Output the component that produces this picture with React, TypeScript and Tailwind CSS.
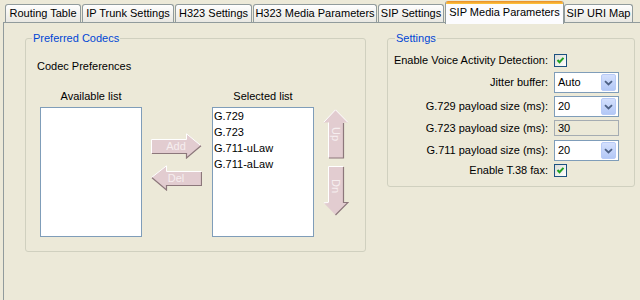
import React from 'react'

const tabs = [
  { label: 'Routing Table', cls: 'w-[76px]' },
  { label: 'IP Trunk Settings', cls: 'ml-[1px] w-[92px]' },
  { label: 'H323 Settings', cls: 'ml-[1px] w-[77px]' },
  { label: 'H323 Media Parameters', cls: 'ml-[1px] w-[124px]' },
  { label: 'SIP Settings', cls: 'ml-[1px] w-[66px]' },
  { label: 'SIP Media Parameters', cls: 'ml-[1px] w-[119px]', active: true },
  { label: 'SIP URI Map', cls: 'w-[69px]' },
]

const selected = ['G.729', 'G.723', 'G.711-uLaw', 'G.711-aLaw']

const arrowFill = '#E2CCD0'
const arrowShade = '#8C777B'
const arrowText = '#F6EEEF'

function Tab({ label, cls, active }: { label: string; cls: string; active?: boolean }) {
  if (active) {
    return (
      <div className={`relative z-10 -mb-[2px] flex h-[23px] flex-col overflow-hidden rounded-t-[3px] border-x border-[#919B9C] bg-[#FCFCFE] ${cls}`}>
        <div className="h-[3px] bg-linear-to-b from-[#E68B2C] to-[#FFC73C]" />
        <div className="flex flex-1 items-center justify-center pb-[3px]">{label}</div>
      </div>
    )
  }
  return (
    <div className={`flex h-[18px] items-center justify-center rounded-t-[3px] border-x border-t border-[#919B9C] bg-linear-to-b from-[#FEFEFE] to-[#E9E8E2] ${cls}`}>
      {label}
    </div>
  )
}

function ListBox({ items }: { items: string[] }) {
  return (
    <div className="mt-[4px] h-[130px] w-[102px] border border-[#7F9DB9] bg-white pl-px">
      {items.map((it) => (
        <div key={it} className="leading-[16px]">{it}</div>
      ))}
    </div>
  )
}

function AddArrow() {
  return (
    <svg width="51" height="26" viewBox="0 0 51 26">
      <polygon points="0.5,6.5 35.5,6.5 35.5,0.5 50,12.5 35.5,25 35.5,20.5 0.5,20.5" fill={arrowFill} />
      <polyline points="0.5,20 0.5,6.5 35.5,6.5 35.5,0.8 49.5,12.3" stroke="#fff" fill="none" />
      <polyline points="1,20.5 35.5,20.5 35.5,25 50,12.8" stroke={arrowShade} strokeWidth="1.2" fill="none" />
      <text x="25" y="17" textAnchor="middle" fontSize="11" fill={arrowText} fontFamily="Liberation Sans, sans-serif">Add</text>
    </svg>
  )
}

function DelArrow() {
  return (
    <svg width="51" height="26" viewBox="0 0 51 26">
      <polygon points="0.5,12.5 15.5,0.5 15.5,6.5 50.5,6.5 50.5,20.5 15.5,20.5 15.5,25" fill={arrowFill} />
      <polyline points="0.8,12.3 15.5,0.8 15.5,6.5 50.5,6.5" stroke="#fff" fill="none" />
      <polyline points="1,12.8 15.5,25 15.5,20.5 50.5,20.5 50.5,7" stroke={arrowShade} strokeWidth="1.2" fill="none" />
      <text x="25" y="17" textAnchor="middle" fontSize="11" fill={arrowText} fontFamily="Liberation Sans, sans-serif">Del</text>
    </svg>
  )
}

function UpArrow() {
  return (
    <svg width="26" height="50" viewBox="0 0 26 50">
      <polygon points="12.5,0.5 25,13.5 20.5,13.5 20.5,49 5.5,49 5.5,13.5 0.5,13.5" fill={arrowFill} />
      <polyline points="0.8,13.2 12.5,0.8 24.7,13.2" stroke="#fff" fill="none" />
      <polyline points="5.5,13.5 5.5,48.5" stroke="#fff" fill="none" />
      <polyline points="20.5,14 20.5,49 6,49" stroke={arrowShade} strokeWidth="1.2" fill="none" />
      <text x="0" y="0" textAnchor="middle" fontSize="11" fill={arrowText} fontFamily="Liberation Sans, sans-serif" transform="translate(9 25) rotate(90)">Up</text>
    </svg>
  )
}

function DnArrow() {
  return (
    <svg width="26" height="50" viewBox="0 0 26 50">
      <polygon points="5.5,0.5 20.5,0.5 20.5,36.5 25,36.5 12.5,49 0.5,36.5 5.5,36.5" fill={arrowFill} />
      <polyline points="5.5,36 5.5,0.5 20,0.5" stroke="#fff" fill="none" />
      <polyline points="0.8,36.8 5.5,36.5" stroke="#fff" fill="none" />
      <polyline points="20.5,1 20.5,36.5 25,36.5 12.5,49" stroke={arrowShade} strokeWidth="1.2" fill="none" />
      <text x="0" y="0" textAnchor="middle" fontSize="11" fill={arrowText} fontFamily="Liberation Sans, sans-serif" transform="translate(9 20) rotate(90)">Dn</text>
    </svg>
  )
}

function Check() {
  return (
    <span className="flex h-[13px] w-[13px] items-center justify-center border border-[#1C5180] bg-linear-to-br from-[#DCDCD7] to-white">
      <svg width="9" height="9" viewBox="0 0 9 9">
        <path d="M1.5 4l2 2.2L7.5 1.8" stroke="#21A121" strokeWidth="2" fill="none" />
      </svg>
    </span>
  )
}

function Combo({ value }: { value: string }) {
  return (
    <div className="flex h-[21px] w-[65px] items-center border border-[#7F9DB9] bg-white pl-[3px] pr-[2px]">
      <span className="flex-1">{value}</span>
      <span className="flex h-[17px] w-[15px] items-center justify-center rounded-[2px] border border-[#B8CBF7] bg-linear-to-b from-[#D4E0FD] to-[#B3C8F6]">
        <svg width="9" height="6" viewBox="0 0 9 6">
          <path d="M1 1.2l3.5 3.3L8 1.2" stroke="#4D6185" strokeWidth="1.8" fill="none" />
        </svg>
      </span>
    </div>
  )
}

function Row({ label, cls, children }: { label: string; cls: string; children: React.ReactNode }) {
  return (
    <div className={`flex items-center ${cls}`}>
      <span className="w-[160px] text-right">{label}</span>
      <div className="ml-[6px]">{children}</div>
    </div>
  )
}

export default function App() {
  return (
    <div className="flex h-[300px] w-[640px] flex-col overflow-hidden bg-[#ECE9D8] font-['Liberation_Sans',Arial,sans-serif] text-[11px] leading-[13px] text-black">
      {/* Tab strip */}
      <div className="flex h-[22px] items-end pl-[5px]">
        {tabs.map((t) => (
          <Tab key={t.label} {...t} />
        ))}
      </div>

      {/* Tab content */}
      <div className="ml-[3px] flex flex-1 items-start border-l border-t border-[#919B9C] pl-[21px] pt-[9px]">
        <fieldset className="w-[341px] rounded-[3px] border border-[#D0D0BF] pb-[14px]">
          <legend className="ml-[6px] px-px text-[#0046D5]">Preferred Codecs</legend>
          <div className="pl-[11px] pt-[15px]">
            <div>Codec Preferences</div>
            <div className="ml-[3px] mt-[17px] flex items-start">
              <div className="flex flex-col items-center">
                <span>Available list</span>
                <ListBox items={[]} />
              </div>
              <div className="ml-[9px] mt-[43px] flex flex-col gap-[6px]">
                <AddArrow />
                <DelArrow />
              </div>
              <div className="ml-[10px] flex flex-col items-center">
                <span>Selected list</span>
                <ListBox items={selected} />
              </div>
              <div className="ml-[9px] mt-[19px] flex flex-col gap-[7px]">
                <UpArrow />
                <DnArrow />
              </div>
            </div>
          </div>
        </fieldset>

        <fieldset className="ml-[21px] w-[248px] rounded-[3px] border border-[#D0D0BF] pb-[9px]">
          <legend className="ml-[7px] px-px text-[#0046D5]">Settings</legend>
          <div className="flex flex-col pt-[9px]">
            <Row label="Enable Voice Activity Detection:" cls="h-[13px]"><Check /></Row>
            <Row label="Jitter buffer:" cls="mt-[5px] h-[21px]"><Combo value="Auto" /></Row>
            <Row label="G.729 payload size (ms):" cls="mt-[3px] h-[21px]"><Combo value="20" /></Row>
            <Row label="G.723 payload size (ms):" cls="mt-[3px] h-[16px]">
              <div className="flex h-[16px] w-[65px] items-center border border-[#A5ACB2] pl-[3px]">30</div>
            </Row>
            <Row label="G.711 payload size (ms):" cls="mt-[4px] h-[21px]"><Combo value="20" /></Row>
            <Row label="Enable T.38 fax:" cls="mt-[3px] h-[13px]"><Check /></Row>
          </div>
        </fieldset>
      </div>
    </div>
  )
}
